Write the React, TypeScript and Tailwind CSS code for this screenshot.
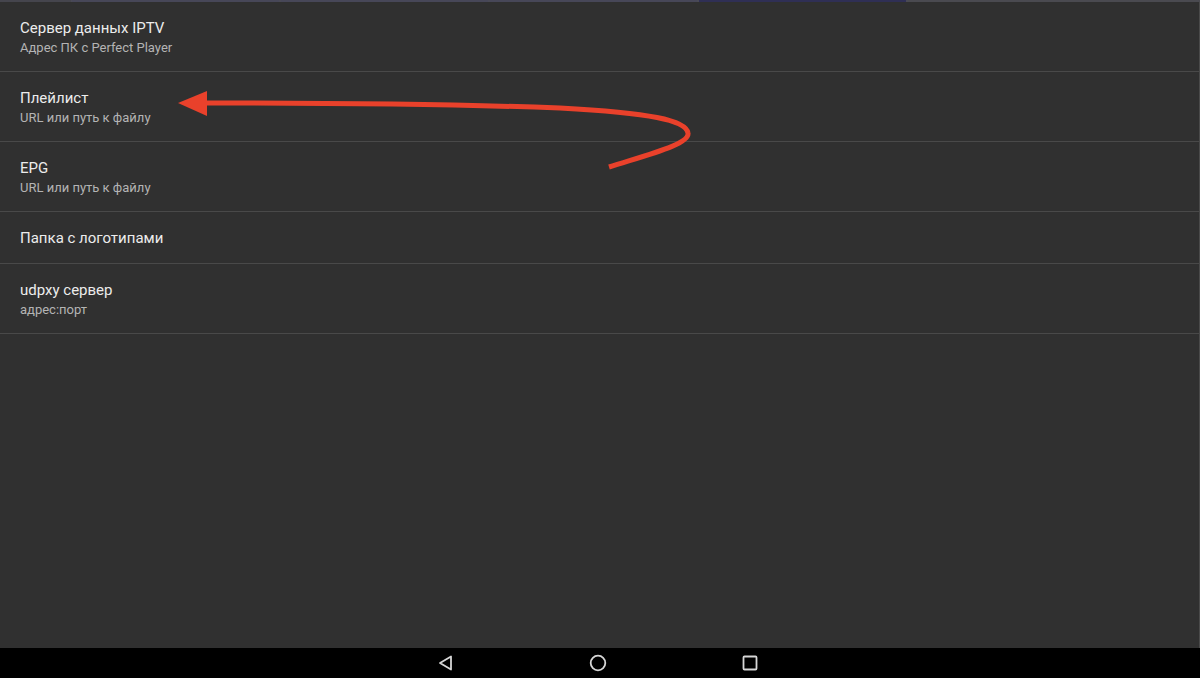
import React from 'react';

type Item = { title: string; subtitle?: string };

const items: Item[] = [
    { title: 'Сервер данных IPTV', subtitle: 'Адрес ПК с Perfect Player' },
    { title: 'Плейлист', subtitle: 'URL или путь к файлу' },
    { title: 'EPG', subtitle: 'URL или путь к файлу' },
    { title: 'Папка с логотипами' },
    { title: 'udpxy сервер', subtitle: 'адрес:порт' },
];

function TabStrip() {
    return (
        <div className="flex h-[2px] shrink-0 bg-[#4a4a55]">
            <div className="w-[71px] bg-[#45454d]" />
            <div className="w-[207px] ml-[1px] bg-[#474758]" />
            <div className="w-[207px] ml-[2px] bg-[#474758]" />
            <div className="w-[207px] ml-[2px] bg-[#474758]" />
            <div className="w-[207px] ml-[2px] bg-[#2f2f55]" />
            <div className="flex-1 ml-[2px] bg-[#4a4a50]" />
        </div>
    );
}

function Row({ item }: { item: Item }) {
    return (
        <div
            className={`flex flex-col justify-center px-5 border-b border-[#494949] ${item.subtitle ? 'h-[70px]' : 'h-[52px]'}`}
        >
            <div className="text-[15px] leading-[20px] text-[#ececec]">{item.title}</div>
            {item.subtitle ? (
                <div className="text-[13px] leading-[17px] text-[#b4b4b4] mt-[1px]">
                    {item.subtitle}
                </div>
            ) : null}
        </div>
    );
}

function Arrow() {
    return (
        <svg
            className="absolute left-0 top-[-2px] pointer-events-none"
            width="1200"
            height="200"
            viewBox="0 0 1200 200"
        >
            <path
                d="M 609 167 C 650 154, 690 144, 688 133 C 686 120, 650 113, 560 108 C 450 104, 320 103, 200 103"
                fill="none"
                stroke="#e9412b"
                strokeWidth="5"
            />
            <polygon points="178,103 207,91 207,116" fill="#e9412b" />
        </svg>
    );
}

function NavBar() {
    return (
        <div className="h-[30px] shrink-0 bg-black flex items-center justify-center">
            <svg width="18" height="18" viewBox="0 0 18 18" className="ml-[-4px]">
                <path
                    d="M 14 2.5 L 14 15.5 L 3 9 Z"
                    fill="none"
                    stroke="#d6d6d6"
                    strokeWidth="1.8"
                    strokeLinejoin="round"
                />
            </svg>
            <svg width="20" height="20" viewBox="0 0 20 20" className="ml-[133px]">
                <circle cx="10" cy="10" r="7.3" fill="none" stroke="#d6d6d6" strokeWidth="1.8" />
            </svg>
            <svg width="18" height="18" viewBox="0 0 18 18" className="ml-[133px]">
                <rect
                    x="2.5"
                    y="2.5"
                    width="13"
                    height="13"
                    rx="1"
                    fill="none"
                    stroke="#d6d6d6"
                    strokeWidth="1.8"
                />
            </svg>
        </div>
    );
}

export default function App() {
    return (
        <div
            className="w-[1200px] h-[678px] flex flex-col bg-[#303030] overflow-hidden"
            style={{ fontFamily: 'Roboto, "Noto Sans", sans-serif' }}
        >
            <TabStrip />
            <div className="relative flex-1 border-r border-[#4a4a4a]">
                <div>
                    {items.map((item) => (
                        <Row key={item.title} item={item} />
                    ))}
                </div>
                <Arrow />
            </div>
            <NavBar />
        </div>
    );
}
